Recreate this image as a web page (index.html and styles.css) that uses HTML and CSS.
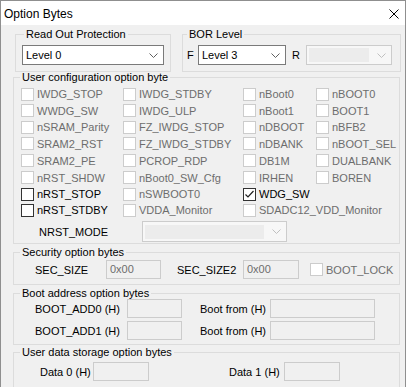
FILE: index.html
```html
<!DOCTYPE html>
<html>
<head>
<meta charset="utf-8">
<link rel="stylesheet" href="styles.css">
</head>
<body>
<div class="window">
  <div class="titlebar">
    <span class="title">Option Bytes</span>
    <svg class="close" width="10" height="10" viewBox="0 0 10 10"><path d="M0.5 0.5 L9.5 9.5 M9.5 0.5 L0.5 9.5" stroke="#000" stroke-width="1" fill="none"/></svg>
  </div>
  <div class="content">
    <div class="top-row">
      <fieldset class="grp grp-rop">
        <legend>Read Out Protection</legend>
        <div class="combo combo-rop"><span class="combo-val">Level 0</span><svg class="chev" width="9" height="5" viewBox="0 0 9 5"><path d="M0.5 0.5 L4.5 4.5 L8.5 0.5" stroke="#606060" fill="none"/></svg></div>
      </fieldset>
      <fieldset class="grp grp-bor">
        <legend>BOR Level</legend>
        <div class="bor-row">
          <span class="lbl-f">F</span>
          <div class="combo combo-f"><span class="combo-val">Level 3</span><svg class="chev" width="9" height="5" viewBox="0 0 9 5"><path d="M0.5 0.5 L4.5 4.5 L8.5 0.5" stroke="#606060" fill="none"/></svg></div>
          <span class="lbl-r">R</span>
          <div class="combo combo-dis combo-r"><span class="combo-inner"></span><svg class="chev" width="9" height="5" viewBox="0 0 9 5"><path d="M0.5 0.5 L4.5 4.5 L8.5 0.5" stroke="#c0c0c0" fill="none"/></svg></div>
        </div>
      </fieldset>
    </div>

    <fieldset class="grp grp-user">
      <legend>User configuration option byte</legend>
      <div class="cb-grid">
        <label class="cb dis"><span class="box"></span>IWDG_STOP</label>
        <label class="cb dis"><span class="box"></span>IWDG_STDBY</label>
        <label class="cb dis"><span class="box"></span>nBoot0</label>
        <label class="cb dis"><span class="box"></span>nBOOT0</label>

        <label class="cb dis"><span class="box"></span>WWDG_SW</label>
        <label class="cb dis"><span class="box"></span>IWDG_ULP</label>
        <label class="cb dis"><span class="box"></span>nBoot1</label>
        <label class="cb dis"><span class="box"></span>BOOT1</label>

        <label class="cb dis"><span class="box"></span>nSRAM_Parity</label>
        <label class="cb dis"><span class="box"></span>FZ_IWDG_STOP</label>
        <label class="cb dis"><span class="box"></span>nDBOOT</label>
        <label class="cb dis"><span class="box"></span>nBFB2</label>

        <label class="cb dis"><span class="box"></span>SRAM2_RST</label>
        <label class="cb dis"><span class="box"></span>FZ_IWDG_STDBY</label>
        <label class="cb dis"><span class="box"></span>nDBANK</label>
        <label class="cb dis"><span class="box"></span>nBOOT_SEL</label>

        <label class="cb dis"><span class="box"></span>SRAM2_PE</label>
        <label class="cb dis"><span class="box"></span>PCROP_RDP</label>
        <label class="cb dis"><span class="box"></span>DB1M</label>
        <label class="cb dis"><span class="box"></span>DUALBANK</label>

        <label class="cb dis"><span class="box"></span>nRST_SHDW</label>
        <label class="cb dis"><span class="box"></span>nBoot0_SW_Cfg</label>
        <label class="cb dis"><span class="box"></span>IRHEN</label>
        <label class="cb dis"><span class="box"></span>BOREN</label>

        <label class="cb"><span class="box"></span>nRST_STOP</label>
        <label class="cb dis"><span class="box"></span>nSWBOOT0</label>
        <label class="cb span2"><span class="box checked"><svg width="11" height="11" viewBox="0 0 11 11"><path d="M1.5 5.5 L4 8 L9.5 2" stroke="#202020" stroke-width="1.2" fill="none"/></svg></span>WDG_SW</label>

        <label class="cb"><span class="box"></span>nRST_STDBY</label>
        <label class="cb dis"><span class="box"></span>VDDA_Monitor</label>
        <label class="cb dis span2"><span class="box"></span>SDADC12_VDD_Monitor</label>
      </div>
      <div class="nrst-row">
        <span class="lbl-nrst">NRST_MODE</span>
        <div class="combo combo-dis combo-nrst"><span class="combo-inner"></span><svg class="chev" width="9" height="5" viewBox="0 0 9 5"><path d="M0.5 0.5 L4.5 4.5 L8.5 0.5" stroke="#c0c0c0" fill="none"/></svg></div>
      </div>
    </fieldset>

    <fieldset class="grp grp-sec">
      <legend>Security option bytes</legend>
      <div class="sec-row">
        <span class="lbl lbl-secsize">SEC_SIZE</span>
        <span class="edit edit-sec">0x00</span>
        <span class="lbl lbl-secsize2">SEC_SIZE2</span>
        <span class="edit edit-sec2">0x00</span>
        <label class="cb dis cb-bootlock"><span class="box"></span>BOOT_LOCK</label>
      </div>
    </fieldset>

    <fieldset class="grp grp-boot">
      <legend>Boot address option bytes</legend>
      <div class="boot-row">
        <span class="lbl lbl-add">BOOT_ADD0 (H)</span>
        <span class="edit edit-add"></span>
        <span class="lbl lbl-from">Boot from (H)</span>
        <span class="edit edit-from"></span>
      </div>
      <div class="boot-row boot-row2">
        <span class="lbl lbl-add">BOOT_ADD1 (H)</span>
        <span class="edit edit-add"></span>
        <span class="lbl lbl-from">Boot from (H)</span>
        <span class="edit edit-from"></span>
      </div>
    </fieldset>

    <fieldset class="grp grp-data">
      <legend>User data storage option bytes</legend>
      <div class="data-row">
        <span class="lbl lbl-d0">Data 0 (H)</span>
        <span class="edit edit-data"></span>
        <span class="lbl lbl-d1">Data 1 (H)</span>
        <span class="edit edit-data"></span>
      </div>
    </fieldset>
  </div>
</div>
</body>
</html>
```

FILE: styles.css
```css
* { box-sizing: border-box; }
html, body { margin: 0; padding: 0; background: #ffffff; }
body {
  width: 409px;
  height: 387px;
  overflow: hidden;
  font-family: "Liberation Sans", Arial, sans-serif;
  font-size: 11px;
  color: #000;
}
.window {
  width: 406px;
  height: 400px;
  border: 1px solid #8f8f8f;
  border-bottom: none;
  background: #f0f0f0;
}
.titlebar {
  height: 24px;
  background: #ffffff;
  display: flex;
  align-items: center;
  padding-left: 3px;
  padding-right: 6px;
}
.title {
  font-size: 12px;
  flex: 1;
  padding-top: 1px;
}
.close { display: block; margin-top: 1px; margin-right: 0; }

.content {
  padding-left: 12px;
  padding-top: 3px;
}
.grp {
  margin: 0;
  padding: 0;
  border: 1px solid #dcdcdc;
  min-inline-size: 0;
}
.grp legend {
  margin-left: 6px;
  padding: 0 2px;
  line-height: 12px;
  height: 12px;
}
.top-row {
  display: flex;
}
.grp-rop {
  margin-left: 2px;
  width: 156px;
  height: 44px;
}
.grp-bor {
  margin-left: 11px;
  width: 219px;
  height: 44px;
}
.grp-rop legend { margin-left: 8px; }
.grp-bor legend { margin-left: 4px; }

.combo {
  height: 20px;
  border: 1px solid #7a7a7a;
  background: #fff;
  display: flex;
  align-items: center;
  padding-left: 3px;
  padding-right: 5px;
}
.combo-val { flex: 1; }
.chev { display: block; }
.combo-rop {
  margin-top: 5px;
  margin-left: 6px;
  width: 142px;
}
.bor-row {
  display: flex;
  align-items: center;
  margin-top: 5px;
}
.lbl-f { margin-left: 4px; width: 7px; }
.combo-f { margin-left: 4px; width: 88px; }
.lbl-r { margin-left: 6px; width: 8px; }
.combo-r { margin-left: 6px; width: 86px; }
.combo-dis {
  border-color: #cccccc;
  background: #f7f7f7;
  padding-left: 2px;
}
.combo-inner {
  flex: 1;
  height: 14px;
  background: #ececec;
  margin-right: 8px;
}

.grp-user {
  margin-top: -1px;
  width: 387px;
  height: 173px;
}
.cb-grid {
  margin-top: 3px;
  padding-left: 7px;
  display: grid;
  grid-template-columns: 102px 120px 73px 1fr;
  grid-template-rows: 16px 17px 16px 17px 17px 17px 16px 16px;
}
.cb {
  display: flex;
  align-items: center;
  white-space: nowrap;
}
.cb.dis { color: #6d6d6d; }
.cb.span2 { grid-column: span 2; }
.box {
  width: 13px;
  height: 13px;
  border: 1px solid #333333;
  background: #ffffff;
  margin-right: 3px;
  flex: none;
  display: flex;
  align-items: center;
  justify-content: center;
}
.cb.dis .box { border-color: #cccccc; }
.box svg { display: block; }

.nrst-row {
  display: flex;
  align-items: center;
  margin-top: 3px;
}
.lbl-nrst { margin-left: 25px; width: 103px; }
.combo-nrst { width: 145px; height: 21px; }

.lbl { white-space: nowrap; }
.edit {
  height: 19px;
  border: 1px solid #cccccc;
  background: #f0f0f0;
  color: #6d6d6d;
  padding-left: 3px;
  line-height: 17px;
  flex: none;
}

.grp-sec {
  margin-top: 2px;
  width: 387px;
  height: 39px;
}
.sec-row {
  display: flex;
  align-items: center;
  margin-top: 2px;
}
.lbl-secsize { margin-left: 21px; width: 71px; }
.edit-sec { width: 55px; }
.lbl-secsize2 { margin-left: 16px; width: 66px; }
.edit-sec2 { width: 56px; }
.cb-bootlock { margin-left: 11px; }

.grp-boot {
  margin-top: 2px;
  width: 387px;
  height: 58px;
}
.boot-row {
  display: flex;
  align-items: center;
}
.boot-row2 { margin-top: 3px; }
.lbl-add { margin-left: 21px; width: 92px; }
.edit-add { width: 55px; }
.lbl-from { margin-left: 18px; width: 70px; }
.edit-from { width: 105px; }

.grp-data {
  margin-top: 1px;
  width: 387px;
  height: 60px;
}
.data-row {
  display: flex;
  align-items: center;
  margin-top: 4px;
}
.lbl-d0 { margin-left: 26px; width: 53px; }
.edit-data { width: 56px; }
.lbl-d1 { margin-left: 80px; width: 55px; }
```
